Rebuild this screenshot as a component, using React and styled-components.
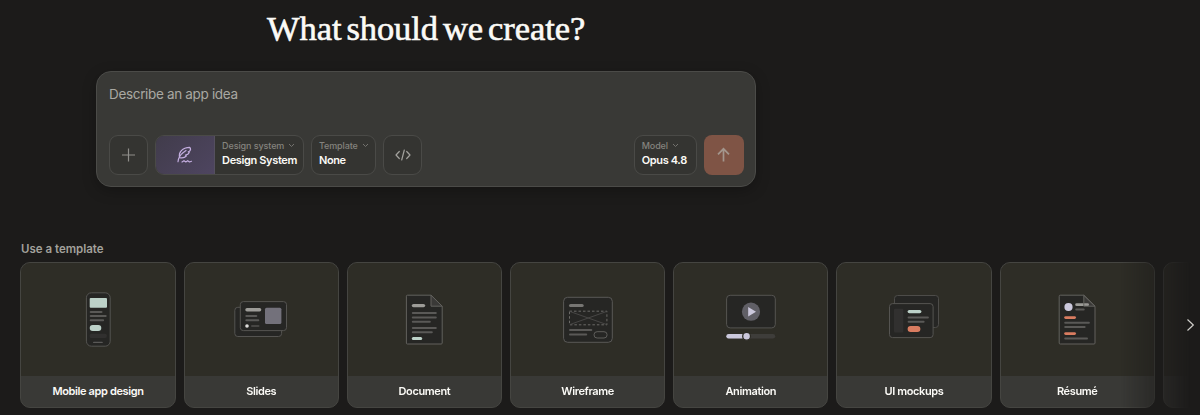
import React from 'react';
import styled, {createGlobalStyle} from 'styled-components'

const templates = [
    {name: 'Mobile app design', art: 'mobile'},
    {name: 'Slides', art: 'slides'},
    {name: 'Document', art: 'document'},
    {name: 'Wireframe', art: 'wireframe'},
    {name: 'Animation', art: 'animation'},
    {name: 'UI mockups', art: 'mockups'},
    {name: 'Résumé', art: 'resume'},
    {name: '', art: null},
]

const Line = ({x, y, w, h = 2, fill = '#5a5957'}) => (
    <rect x={x} y={y - h / 2} width={w} height={h} rx={h / 2} fill={fill}/>
)

const MobileArt = () => (
    <>
        <rect x="28.4" y="12.8" width="23.8" height="53.4" rx="5" fill="#262624" stroke="#555451"/>
        <rect x="31.7" y="18" width="17.3" height="9.7" rx="1" fill="#bcd1c8"/>
        <Line x={31.7} y={32} w={12.8}/>
        <Line x={31.7} y={36.1} w={17}/>
        <Line x={31.7} y={40.3} w={14.4}/>
        <rect x="31.7" y="45" width="11.6" height="6" rx="3" fill="#bcd1c8"/>
        <rect x="31.7" y="53.7" width="17" height="4.3" rx="1.5" fill="#31302f"/>
        <Line x={35} y={62.4} w={9.8} h={1.4}/>
    </>
)

const SlidesArt = () => (
    <>
        <rect x="13.8" y="27.3" width="46.8" height="29.2" rx="3" fill="#262624" stroke="#555451"/>
        <rect x="19.3" y="21.6" width="46.2" height="29" rx="3" fill="#262624" stroke="#555451"/>
        <Line x={24.3} y={29.7} w={16} h={3.4} fill="#9d9c98"/>
        <Line x={24.3} y={36} w={12}/>
        <Line x={24.3} y={40.3} w={14}/>
        <circle cx="26" cy="46" r="1.8" fill="#dedddb"/>
        <Line x={30} y={46} w={8.5} fill="#474644"/>
        <rect x="44" y="27.7" width="16.4" height="16.4" rx="1.5" fill="#73717b"/>
    </>
)

const DocumentArt = () => (
    <>
        <path d="M22.4 16.2a1 1 0 0 1 1-1H47L58.2 26.2V63a1 1 0 0 1-1 1H23.4a1 1 0 0 1-1-1Z" fill="#262624" stroke="#62615d"/>
        <path d="M47 15.2V26.2H58.2Z" fill="#3a3937" stroke="#62615d"/>
        <Line x={27.8} y={25.6} w={13.4} h={3.4} fill="#9d9c98"/>
        <Line x={27.8} y={33.1} w={25}/>
        <Line x={27.8} y={37.4} w={25}/>
        <Line x={27.8} y={41.7} w={19}/>
        <Line x={27.8} y={48} w={25}/>
        <Line x={27.8} y={52.2} w={21}/>
        <Line x={27.8} y={58.5} w={10.4} h={3} fill="#bcd1c8"/>
    </>
)

const WireframeArt = () => (
    <>
        <rect x="15.6" y="17.3" width="48.7" height="45" rx="4" fill="#262624" stroke="#5a5957"/>
        <Line x={21} y={25.5} w={14.7} h={3.2} fill="#777673"/>
        <rect x="21.5" y="31.2" width="37.4" height="13.6" fill="none" stroke="#6b6a67" strokeDasharray="2.5 2"/>
        <path d="M22 31.5L58.5 44.5M58.5 31.5L22 44.5" stroke="#4b4a48" strokeWidth=".9"/>
        <Line x={21} y={50.1} w={23.3}/>
        <Line x={21} y={54.4} w={18.2}/>
        <rect x="46" y="51.7" width="13.1" height="6.3" rx="3.1" fill="none" stroke="#5f5e5b"/>
    </>
)

const AnimationArt = () => (
    <>
        <rect x="15.6" y="15.3" width="48.7" height="32.6" rx="3.5" fill="#262624" stroke="#555451"/>
        <circle cx="40" cy="31.7" r="9.1" fill="#605f66"/>
        <path d="M37.2 27V36.4L45 31.7Z" fill="#cbc8dc"/>
        <Line x={15.3} y={56.3} w={48.9} h={4.6} fill="#3e3d3a"/>
        <Line x={15.3} y={56.3} w={18} h={4.6} fill="#cbc8dc"/>
        <circle cx="35.6" cy="56.3" r="3.9" fill="#cbc8dc" stroke="#2c2b25" strokeWidth="1.3"/>
    </>
)

const MockupsArt = () => (
    <>
        <rect x="20.5" y="15.5" width="44" height="32" rx="3" fill="#262624" stroke="#4d4c49"/>
        <rect x="15.5" y="23.6" width="43.6" height="34" rx="3" fill="#262624" stroke="#555451"/>
        <rect x="20" y="28.7" width="9.3" height="23.7" rx="1" fill="#31302f"/>
        <Line x={33.6} y={31.6} w={13.8} h={3.3} fill="#bcd1c8"/>
        <Line x={33.6} y={37.4} w={21.3}/>
        <Line x={33.6} y={41.7} w={17}/>
        <Line x={33.6} y={49} w={12.8} h={6} fill="#d97c60"/>
    </>
)

const ResumeArt = () => (
    <>
        <path d="M22.2 16.2a1 1 0 0 1 1-1H46.8L58 26.2V63a1 1 0 0 1-1 1H23.2a1 1 0 0 1-1-1Z" fill="#262624" stroke="#62615d"/>
        <circle cx="31.5" cy="27" r="4.1" fill="#cbc8dc"/>
        <Line x={38.2} y={24.7} w={13.8} h={2.8} fill="#9d9c98"/>
        <Line x={38.2} y={29.6} w={9.5}/>
        <path d="M46.8 15.2V26.2H58Z" fill="#8a898533" stroke="#62615d"/>
        <Line x={27.2} y={37.6} w={11.8} h={2.8} fill="#d97c60"/>
        <Line x={27.2} y={42.8} w={25.7}/>
        <Line x={27.2} y={47} w={21.4}/>
        <Line x={27.2} y={53.6} w={11.8} h={2.8} fill="#d97c60"/>
        <Line x={27.2} y={58.6} w={23.8}/>
    </>
)

const arts = {
    mobile: MobileArt,
    slides: SlidesArt,
    document: DocumentArt,
    wireframe: WireframeArt,
    animation: AnimationArt,
    mockups: MockupsArt,
    resume: ResumeArt,
}

const Chevron = () => (
    <svg width="7" height="5" viewBox="0 0 7 5" fill="none">
        <path d="M1 1L3.5 3.5L6 1" stroke="#73726e"/>
    </svg>
)

const Picker = ({label, value}) => (
    <PickerText>
        <PickerLabel>{label}<Chevron/></PickerLabel>
        <PickerValue>{value}</PickerValue>
    </PickerText>
)

const TemplateCard = ({item}) => {
    const Art = arts[item.art]

    return (
        <Card>
            <Preview>
                {Art && <svg width="80" height="80" viewBox="0 0 80 80" fill="none"><Art/></svg>}
            </Preview>
            <CardName>{item.name}</CardName>
        </Card>
    )
}

const App = () => {
    return (
        <Page>
            <GlobalStyle/>
            <Title>What should we create?</Title>
            <Composer>
                <Prompt>Describe an app idea</Prompt>
                <Toolbar>
                    <IconButton>
                        <svg width="14" height="14" viewBox="0 0 14 14">
                            <path d="M6.5 .5V13.5M0 7H13" stroke="#8f8e8a" strokeWidth="1.2"/>
                        </svg>
                    </IconButton>
                    <Group $width={149}>
                        <Swatch>
                            <svg width="18" height="18" viewBox="0 0 18 18" fill="none" stroke="#c3addf" strokeWidth="1.2" strokeLinecap="round" strokeLinejoin="round">
                                <path d="M2 15.7C2.3 12 4 9 7 6.7L10 4.5"/>
                                <path d="M3.5 11.2C2.5 6.5 6 1.5 13.8 1.3C14.8 2.5 14.7 4 13.5 5.3L12.3 5.7L13.3 6.6C12.5 8.3 11 8.9 9.5 9.2L10.3 10C8.8 11.7 6 12.1 3.7 11.6"/>
                                <path d="M6 16L8 14.7L9.8 16L11.7 14.7L13.5 16L15.5 15.3"/>
                            </svg>
                        </Swatch>
                        <Picker label="Design system" value="Design System"/>
                    </Group>
                    <Group $width={65.5}>
                        <Picker label="Template" value="None"/>
                    </Group>
                    <IconButton>
                        <svg width="16" height="12" viewBox="0 0 16 12" fill="none" stroke="#a3a29e" strokeWidth="1.2" strokeLinecap="round" strokeLinejoin="round">
                            <path d="M4.3 2.5L1 6L4.3 9.5M11.7 2.5L15 6L11.7 9.5M9.3 1L6.7 11"/>
                        </svg>
                    </IconButton>
                    <Spacer/>
                    <Group $width={63.5}>
                        <Picker label="Model" value="Opus 4.8"/>
                    </Group>
                    <Send>
                        <svg width="14" height="16" viewBox="0 0 14 16" fill="none" stroke="#a3958c" strokeWidth="1.7">
                            <path d="M6.5 14.5V2M1 7.3L6.5 1.8L12 7.3"/>
                        </svg>
                    </Send>
                </Toolbar>
            </Composer>
            <Heading>Use a template</Heading>
            <Carousel>
                <Row>
                    {templates.map(item => (
                        <TemplateCard item={item} key={item.name}/>
                    ))}
                </Row>
                <Next>
                    <svg width="9" height="14" viewBox="0 0 9 14" fill="none">
                        <path d="M1.5 1.5L7.3 7L1.5 12.5" stroke="#d0cfca" strokeWidth="1.2"/>
                    </svg>
                </Next>
            </Carousel>
        </Page>
    );
};

export default App;


const GlobalStyle = createGlobalStyle`
    * {
        box-sizing: border-box;
    }
    body {
        margin: 0;
        background: #1c1b1a;
        font-family: Inter, 'Liberation Sans', sans-serif;
    }
`
const Title = styled.h1`
    margin: 8px 0 0 267px;
    height: 42px;
    line-height: 41px;
    font-family: 'Liberation Serif', serif;
    font-weight: 400;
    font-size: 34.5px;
    letter-spacing: -0.08px;
    word-spacing: -3.5px;
    color: #fbfaf6;
    -webkit-text-stroke: 0.6px #fbfaf6;
    white-space: nowrap;
`
const Page = styled.div`
    height: 415px;
    overflow: hidden;
    display: flex;
    flex-direction: column;
`
const Composer = styled.div`
    margin: 21px 0 0 96px;
    width: 660px;
    height: 116px;
    padding: 12px 11.5px 11px 12px;
    display: flex;
    flex-direction: column;
    justify-content: space-between;
    background: #393936;
    border: 1px solid #4b4b48;
    border-radius: 15px;
    box-shadow: 0 4px 14px rgba(0, 0, 0, 0.25);
`
const Prompt = styled.div`
    height: 20px;
    line-height: 20px;
    font-size: 13.5px;
    letter-spacing: -0.33px;
    color: #a9a8a2;
    white-space: nowrap;
`
const Toolbar = styled.div`
    display: flex;
    gap: 6.8px;
`
const IconButton = styled.button`
    width: 39.3px;
    height: 40px;
    padding: 0;
    display: flex;
    align-items: center;
    justify-content: center;
    background: #343431;
    border: 1px solid #4a4a47;
    border-radius: 9px;
`
const Group = styled.div`
    width: ${({$width}) => $width}px;
    height: 40px;
    display: flex;
    overflow: hidden;
    background: #343431;
    border: 1px solid #4a4a47;
    border-radius: 9px;
`
const Swatch = styled.div`
    width: 59px;
    flex-shrink: 0;
    display: flex;
    align-items: center;
    justify-content: center;
    background: linear-gradient(135deg, #413c4b, #4e4560);
    border-right: 1px solid #55505f;
`
const PickerText = styled.div`
    padding: 3px 0 0 7px;
    white-space: nowrap;
`
const PickerLabel = styled.div`
    display: flex;
    align-items: center;
    gap: 4px;
    height: 13px;
    margin-bottom: 1px;
    font-size: 9px;
    font-weight: 500;
    letter-spacing: -0.1px;
    color: #84837e;
`
const PickerValue = styled.div`
    height: 15px;
    line-height: 15px;
    font-size: 11px;
    font-weight: 600;
    letter-spacing: -0.36px;
    color: #fbfaf6;
`
const Spacer = styled.div`
    flex: 1;
`
const Send = styled.button`
    width: 39.5px;
    height: 40px;
    padding: 0;
    display: flex;
    align-items: center;
    justify-content: center;
    background: #7f5445;
    border: none;
    border-radius: 8px;
`
const Heading = styled.h2`
    margin: 54px 0 0 21px;
    height: 16px;
    line-height: 16px;
    font-size: 11.5px;
    font-weight: 600;
    color: #a3a29c;
`
const Carousel = styled.div`
    margin-top: 5px;
    height: 146px;
    position: relative;
`
const Row = styled.div`
    display: flex;
    gap: 7.9px;
    padding-left: 20.4px;
    overflow: hidden;
    mask-image: linear-gradient(to right, #000 1120px, transparent 1190px);
`
const Card = styled.div`
    flex: 0 0 155.3px;
    height: 146px;
    overflow: hidden;
    background: #393936;
    border: 1px solid #454541;
    border-radius: 10px;
`
const Preview = styled.div`
    height: 113px;
    display: flex;
    align-items: center;
    justify-content: center;
    background: #2e2d26;
`
const CardName = styled.div`
    height: 31px;
    line-height: 31px;
    text-align: center;
    font-size: 11px;
    font-weight: 600;
    letter-spacing: -0.38px;
    color: #fbfaf6;
`
const Next = styled.div`
    position: absolute;
    right: 5px;
    top: 56px;
    line-height: 0;
`
